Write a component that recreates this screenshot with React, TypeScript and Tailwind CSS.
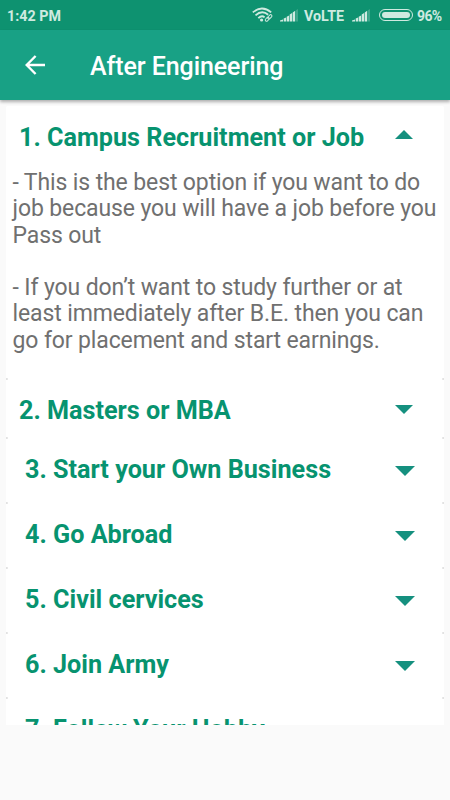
import React from "react";

function Signal() {
  return (
    <svg width="18" height="13" viewBox="0 0 18 13" className="block shrink-0" fill="#cfeae0">
      <path d="M0 12.5V11.5L3 10.5V12.5ZM3.7 12.5V9.5L6.1 8.5V12.5ZM6.7 7.8L9.1 6.6V12.5H6.7ZM9.7 5.5L12.1 4V12.5H9.7ZM12.7 3.4L15.2 1.8V12.5H12.7Z" />
      <path d="M16 1.3L18 0V12.5H16Z" opacity=".25" />
    </svg>
  );
}

function Wifi() {
  return (
    <svg width="22" height="16" viewBox="0 0 22 16" className="block shrink-0" fill="none" stroke="#cfeae0" strokeWidth="1.8">
      <path d="M.8 5.4Q10 -2.4 19.2 5.4" />
      <path d="M3.5 8.4Q10 2.4 16.2 7.8" />
      <path d="M6.3 11.2Q9.8 7.8 12.6 10.4" />
      <circle cx="9.6" cy="13" r="1.6" fill="#cfeae0" stroke="none" />
      <g strokeWidth="1">
        <rect x="16.5" y="7.3" width="2.6" height="5" rx="1.3" transform="rotate(45 17.8 9.8)" />
        <rect x="14" y="10" width="2.6" height="4.5" rx="1.3" transform="rotate(45 15.3 12.2)" />
      </g>
    </svg>
  );
}

function StatusBar() {
  return (
    <div className="flex h-[30px] items-start bg-[#0e9270] font-bold text-[#cfeae0]">
      <span className="ml-[7px] mt-[6px] w-[245px] whitespace-nowrap text-[14.3px] leading-[20px]">1:42 PM</span>
      <div className="mt-[7px] w-[27px]"><Wifi /></div>
      <div className="mt-[9px] w-[25px] pl-[1px]"><Signal /></div>
      <span className="mt-[6px] w-[48px] whitespace-nowrap text-[14.3px] leading-[20px]">VoLTE</span>
      <div className="mt-[9px] w-[27px]"><Signal /></div>
      <div className="mt-[9px] h-[12px] w-[34px] rounded-full border border-[#cfeae0] p-[2px]">
        <div className="h-full w-[28px] rounded-full bg-[#cfeae0]" />
      </div>
      <span className="ml-[4px] mt-[6px] whitespace-nowrap text-[14px] leading-[20px] tracking-[-0.6px]">96%</span>
    </div>
  );
}

function Arrow({ up = false, large = false }: { up?: boolean; large?: boolean }) {
  const w = large ? 20 : 18;
  const h = large ? 10 : 9;
  return (
    <svg width={w} height={h} viewBox={`0 0 ${w} ${h}`} className="block" fill="#15907f">
      <path d={up ? `M0 ${h}L${w / 2} 0L${w} ${h}Z` : `M0 0H${w}L${w / 2} ${h}Z`} />
    </svg>
  );
}

const items = ["3. Start your Own Business", "4. Go Abroad", "5. Civil cervices", "6. Join Army", "7. Follow Your Hobby"];
const title = "whitespace-nowrap text-[25.2px] font-bold leading-[30px] text-[#07936f]";

function CardCorners() {
  return (
    <div className="flex h-0 justify-between">
      <span className="h-[2px] w-[2px] shrink-0 rounded-r-full bg-[#e2e2e2]" />
      <span className="h-[2px] w-[2px] shrink-0 rounded-l-full bg-[#e2e2e2]" />
    </div>
  );
}

export default function App() {
  return (
    <div className="h-[800px] w-[450px] overflow-hidden bg-[#fafafa] font-['Roboto','Noto_Sans',sans-serif]">
      <StatusBar />
      <header className="flex h-[70px] items-start bg-[#18a185] shadow-[0_2px_3px_rgba(0,0,0,0.3)]">
        <svg width="20" height="20" viewBox="0 0 20 20" className="ml-[25px] mt-[25px] block" fill="none" stroke="white" strokeWidth="2.4">
          <path d="M20 10H2M10.6 1L1.7 10L10.6 19" />
        </svg>
        <h1 className="ml-[45px] mt-[22px] whitespace-nowrap text-[25px] font-medium leading-[30px] tracking-[-0.08px] text-white">After Engineering</h1>
      </header>
      <main className="mx-[6px] mt-[6px] h-[619px] overflow-hidden rounded-t-[2px] bg-white">
        <section className="h-[272px]">
          <div className="flex h-[59px] items-start justify-between pl-[13px] pr-[31px] pt-[17px]">
            <h2 className={title}>1. Campus Recruitment or Job</h2>
            <div className="mt-[7px]"><Arrow up /></div>
          </div>
          <div className="ml-[6.5px] mt-[5px] whitespace-nowrap text-[23px] leading-[26.3px] tracking-[-0.12px] text-[#707070]">
            <p>- This is the best option if you want to do<br />job because you will have a job before you<br />Pass out</p>
            <p className="mt-[26.3px]">- If you don’t want to study further or at<br />least immediately after B.E. then you can<br />go for placement and start earnings.</p>
          </div>
        </section>
        <section className="h-[59px]">
          <CardCorners />
          <div className="flex items-start justify-between pl-[13px] pr-[31px] pt-[18px]">
            <h2 className={title}>2. Masters or MBA</h2>
            <div className="mt-[9px]"><Arrow /></div>
          </div>
        </section>
        {items.map((item) => (
          <section key={item} className="h-[65px]">
            <CardCorners />
            <div className="flex items-start justify-between pl-[19px] pr-[29px] pt-[18px]">
              <h2 className={title}>{item}</h2>
              <div className="mt-[11px]"><Arrow large /></div>
            </div>
          </section>
        ))}
      </main>
    </div>
  );
}
